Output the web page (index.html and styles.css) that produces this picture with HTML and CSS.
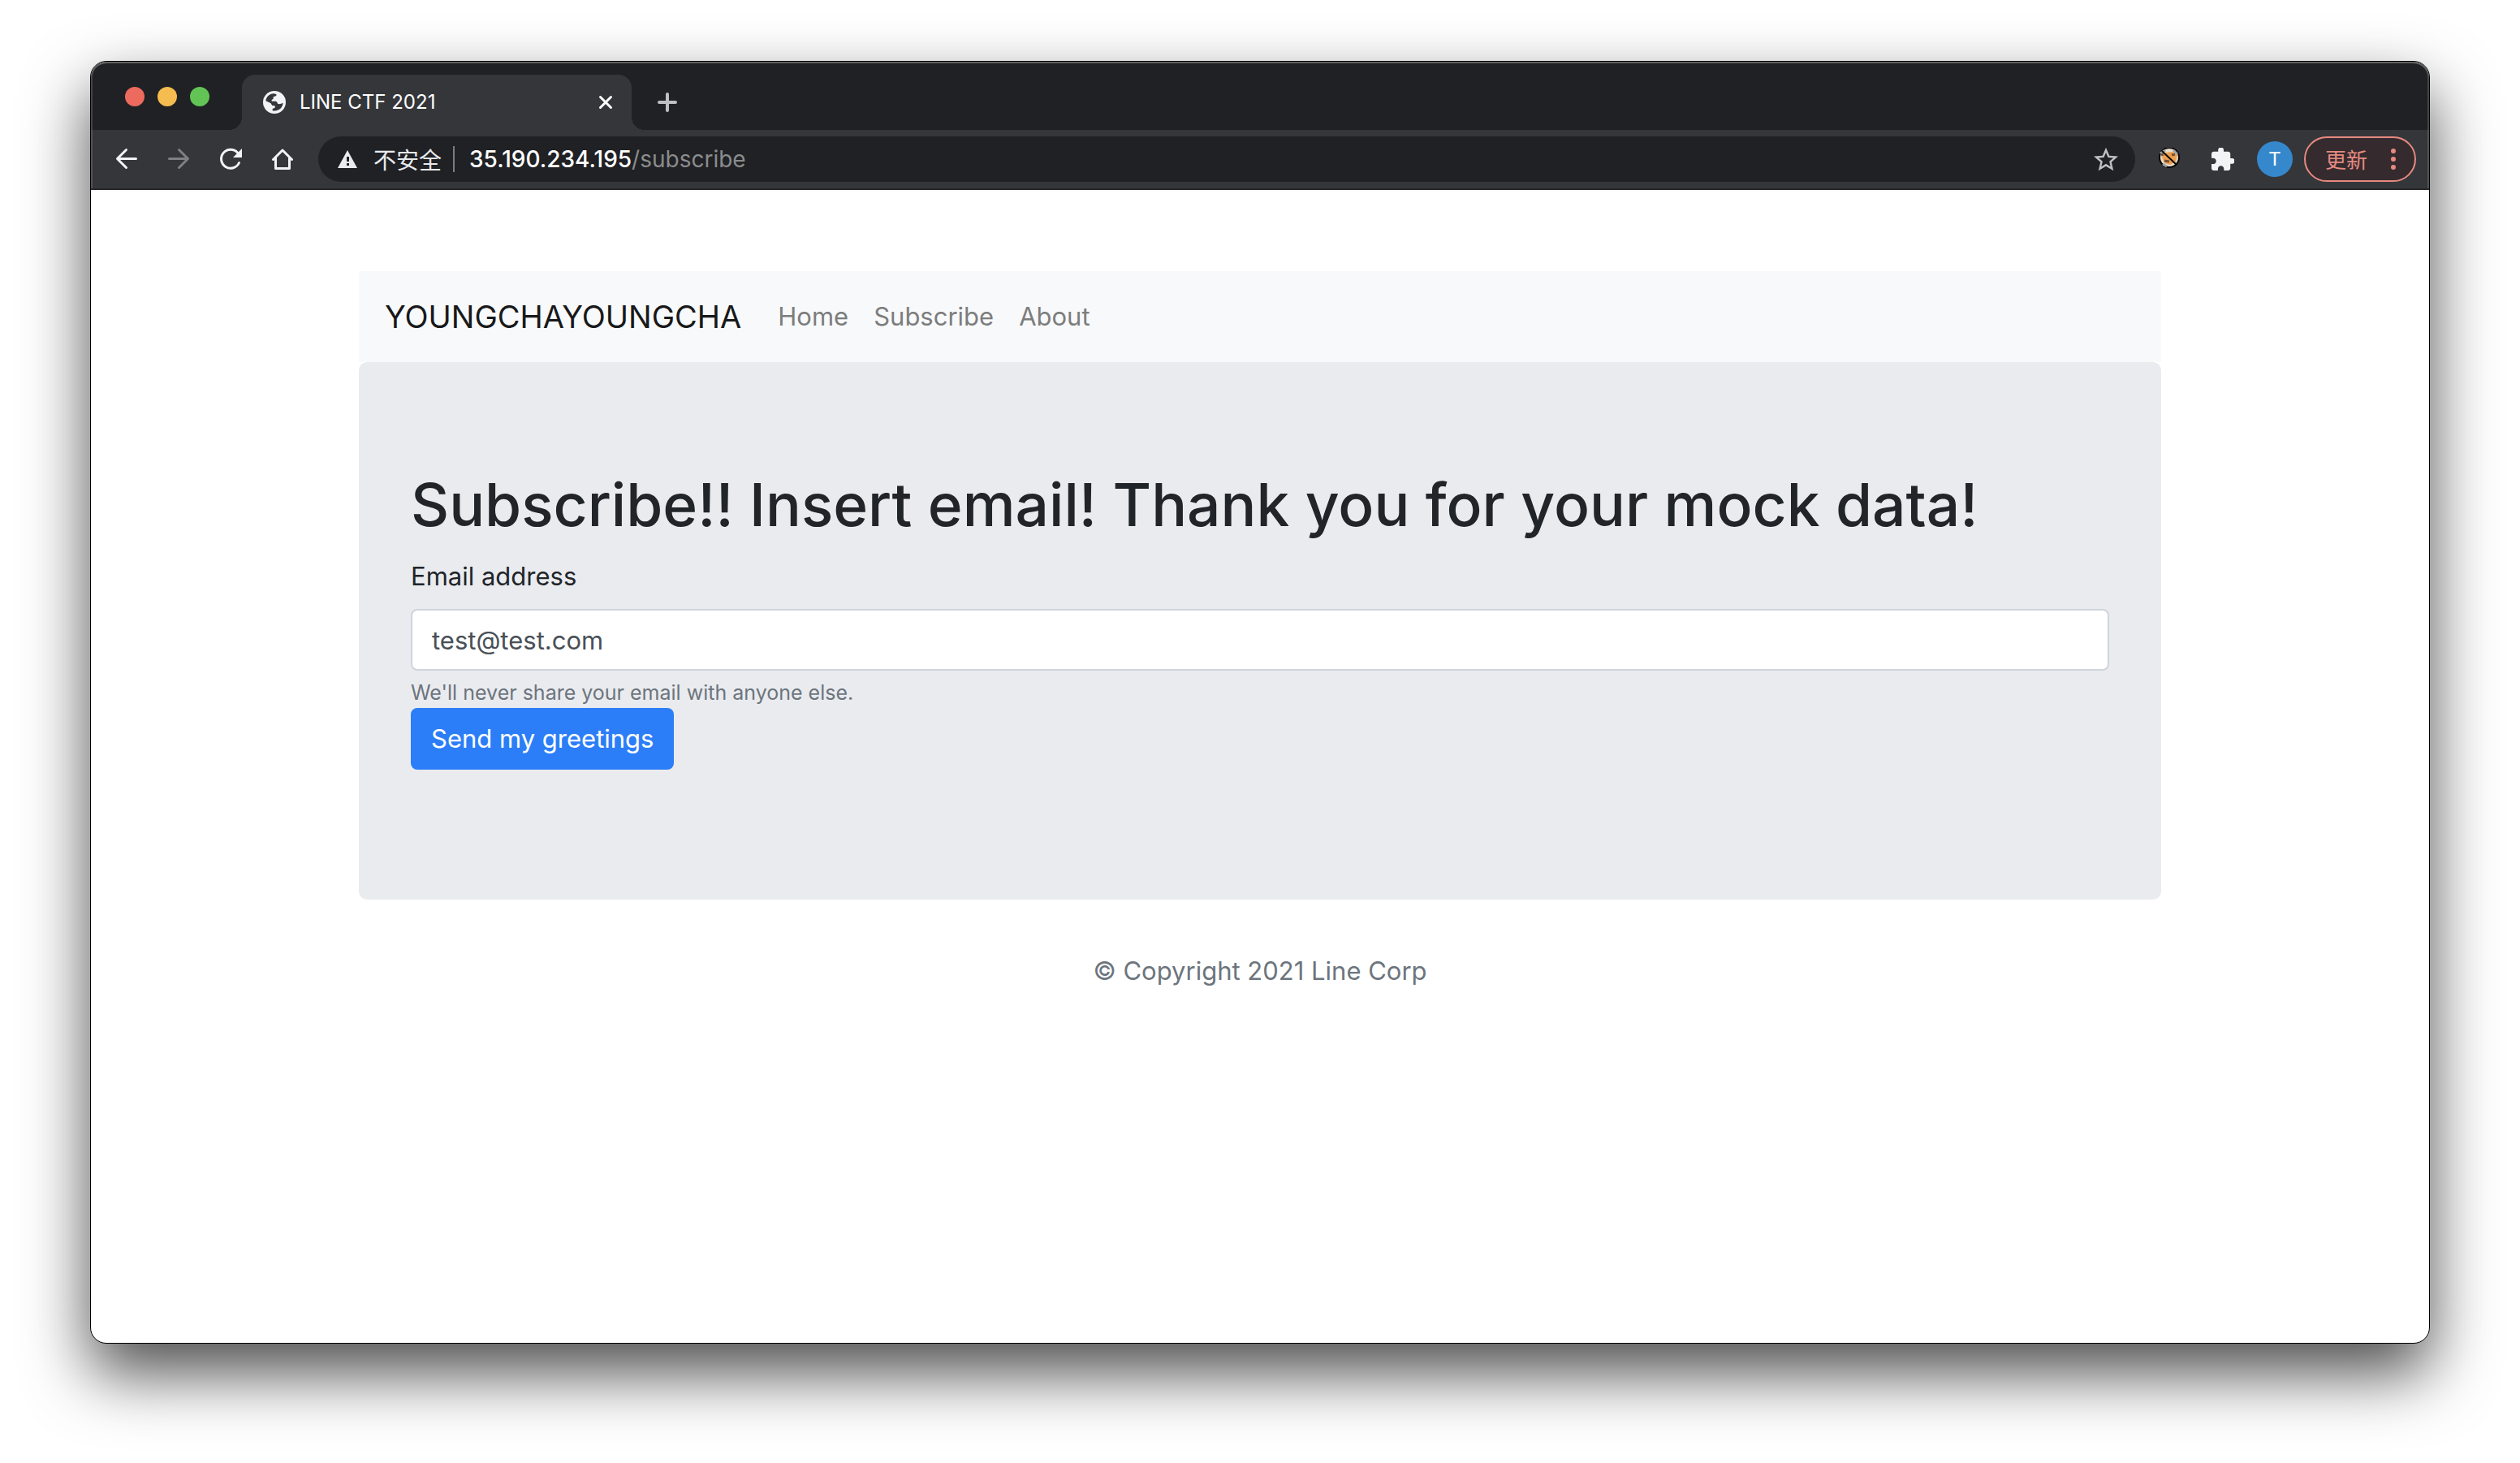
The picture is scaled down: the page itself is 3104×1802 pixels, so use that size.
FILE: index.html
```html
<!DOCTYPE html>
<html lang="en">
<head>
  <meta charset="utf-8">
  <meta name="viewport" content="width=device-width, initial-scale=1">
  <title>LINE CTF 2021</title>
  <link rel="stylesheet" href="styles.css">
</head>
<body>
  <div class="window">
    <header class="chrome">
      <div class="tabstrip">
        <div class="lights">
          <span class="light light-close"></span>
          <span class="light light-min"></span>
          <span class="light light-max"></span>
        </div>
        <div class="tab">
          <svg class="icon-28" viewBox="12 12 84 84" aria-hidden="true"><circle cx="54" cy="54" r="42" fill="#f1f3f4"/><path d="M22 49Q24 31 40 24Q50 20 61 24V30L50 34V41L44 45V50H59Q65 52 66 59Q73 63 86 56Q84 74 69 82Q58 87 47 85V78L56 74V67L46 66L40 57Z" fill="#35363a"/></svg>
          <span class="tab-title">LINE CTF 2021</span>
          <button class="plain" type="button" aria-label="Close tab"><svg class="icon-18" viewBox="0 0 18 18" fill="none" stroke="#fff" stroke-width="3" stroke-linecap="round"><path d="M2.500 2.500l13 13M15.500 2.500l-13 13"/></svg></button>
        </div>
        <button class="plain new-tab" type="button" aria-label="New tab"><svg class="icon-24" viewBox="0 0 24 24" fill="none" stroke="#bdc1c6" stroke-width="4" stroke-linecap="round"><path d="M12 2v20M2 12h20"/></svg></button>
      </div>
      <div class="toolbar">
        <div class="nav-buttons">
          <button class="plain" type="button" aria-label="Back"><svg class="icon-28" viewBox="0 0 28 28" fill="none" stroke="#f1f3f4" stroke-width="3" stroke-linecap="round" stroke-linejoin="round"><path d="M25.500 13.500H3M13.500 2.500l-11 11 11 11"/></svg></button>
          <button class="plain" type="button" aria-label="Forward"><svg class="icon-28" viewBox="0 0 28 28" fill="none" stroke="#7f8082" stroke-width="3" stroke-linecap="round" stroke-linejoin="round"><path d="M2.500 13.500H25M14.500 2.500l11 11-11 11"/></svg></button>
          <button class="plain" type="button" aria-label="Reload"><svg class="icon-28" viewBox="0 0 28 28"><path d="M24.500 18.500A11.500 11.500 0 1 1 22.500 6" fill="none" stroke="#f1f3f4" stroke-width="3" stroke-linecap="round"/><path d="M28 1v11H17z" fill="#f1f3f4"/></svg></button>
          <button class="plain" type="button" aria-label="Home"><svg class="icon-28" viewBox="0 0 28 28" fill="none" stroke="#f1f3f4" stroke-width="3" stroke-linecap="round" stroke-linejoin="round"><path d="M2.500 14.500L14 3l11.500 11.500M5.500 12.500v13h17v-13"/></svg></button>
        </div>
        <div class="omnibox">
          <svg class="icon-24" viewBox="0 0 24 24" aria-hidden="true"><path d="M12 1l12 22H0z" fill="#e8eaed"/><path d="M11 9h3v6h-3zM11 17h3v3h-3z" fill="#202124"/></svg>
          <span class="insecure" lang="zh">不安全</span>
          <span class="divider"></span>
          <span class="url"><span class="host">35.190.234.195</span>/subscribe</span>
          <button class="plain" type="button" aria-label="Bookmark"><svg class="icon-30" viewBox="2 1.500 20 20" fill="#bdc1c6"><path d="M22 9.240l-7.190-.62L12 2 9.190 8.630 2 9.240l5.460 4.730L5.820 21 12 17.270 18.180 21l-1.630-7.030L22 9.240zM12 15.400l-3.760 2.270 1-4.280-3.320-2.880 4.380-.38L12 6.100l1.710 4.040 4.380.38-3.320 2.880 1 4.280L12 15.400z"/></svg></button>
        </div>
        <button class="plain extension" type="button" aria-label="Extension"><svg class="icon-28" viewBox="0 0 28 28"><circle cx="14" cy="12" r="12" fill="#e9dccb" stroke="#090807" stroke-width="2"/><path d="M3 7l6-4M19 3l5 5M6 20l5 3" stroke="#9da3a8" stroke-width="3"/><path d="M5 12l4-6 9-1 6 4-2 8-7 4-7-2z" fill="#eda04e"/><path d="M4 9l3-1M17 9l4-1M8 16l6 1" stroke="#72533b" stroke-width="3"/><path d="M5 4l18 17" stroke="#090807" stroke-width="2"/></svg></button>
        <button class="plain" type="button" aria-label="Extensions"><svg class="icon-28" viewBox="2 1.500 20.500 20.500" fill="#f1f3f4"><path d="M20.500 11H19V7c0-1.100-.9-2-2-2h-4V3.500C13 2.120 11.880 1 10.500 1S8 2.120 8 3.500V5H4c-1.100 0-1.990.9-1.990 2v3.800H3.500c1.490 0 2.700 1.210 2.700 2.700s-1.210 2.700-2.700 2.700H2V20c0 1.100.9 2 2 2h3.800v-1.500c0-1.490 1.210-2.700 2.700-2.700 1.490 0 2.700 1.210 2.700 2.700V22H17c1.100 0 2-.9 2-2v-4h1.500c1.380 0 2.500-1.120 2.500-2.500S21.880 11 20.500 11z"/></svg></button>
        <button class="avatar" type="button">T</button>
        <button class="update" type="button" lang="zh">更新<svg class="dots" viewBox="0 0 6 28" fill="#e68a81" aria-hidden="true"><circle cx="3" cy="4" r="3"/><circle cx="3" cy="14" r="3"/><circle cx="3" cy="24" r="3"/></svg></button>
      </div>
    </header>
    <div class="page">
      <div class="container">
        <nav class="navbar">
          <a class="brand" href="#">YOUNGCHAYOUNGCHA</a>
          <a class="nav-link" href="#">Home</a>
          <a class="nav-link" href="#">Subscribe</a>
          <a class="nav-link" href="#">About</a>
        </nav>
        <main class="jumbotron">
          <h1 class="title">Subscribe!! Insert email! Thank you for your mock data!</h1>
          <form class="form">
            <label class="label" for="email">Email address</label>
            <input class="input" id="email" type="email" value="test@test.com" aria-describedby="email-help">
            <small class="help" id="email-help">We'll never share your email with anyone else.</small>
            <button class="submit" type="button">Send my greetings</button>
          </form>
        </main>
        <footer class="footer">© Copyright 2021 Line Corp</footer>
      </div>
    </div>
  </div>
</body>
</html>
```
FILE: styles.css
```css
* {
  box-sizing: border-box;
}

body {
  margin: 0;
  min-height: 100vh;
  padding: 75px 111px 147px;
  display: flex;
  background: #fff;
  color: #212529;
  font: 31px/48px Inter, "Noto Sans CJK TC", sans-serif;
}

button,
input {
  font: inherit;
}

.window {
  flex: 1;
  min-width: 0;
  display: flex;
  flex-direction: column;
  border: 1px solid #000;
  border-radius: 20px;
  background: #fff;
  box-shadow: 0 36px 80px rgba(0, 0, 0, 0.7);
}

.plain {
  display: flex;
  padding: 0;
  border: 0;
  background: none;
}

.icon-18 { width: 18px; height: 18px; }
.icon-24 { width: 24px; height: 24px; }
.icon-28 { width: 28px; height: 28px; }
.icon-30 { width: 30px; height: 30px; }

/* Browser chrome */
.tabstrip {
  display: flex;
  align-items: flex-end;
  height: 84px;
  padding-left: 42px;
  border-radius: 20px 20px 0 0;
  background: #202124;
  box-shadow: inset 0 2px #606360, inset 2px 0 #434447, inset -2px 0 #434447;
}

.lights {
  display: flex;
  gap: 16px;
  margin-right: 40px;
  padding-bottom: 29px;
}

.light {
  width: 24px;
  height: 24px;
  border-radius: 50%;
}

.light-close { background: #ed6a5e; }
.light-min { background: #f5bd4f; }
.light-max { background: #61c454; }

.tab {
  position: relative;
  display: flex;
  align-items: center;
  gap: 17px;
  width: 480px;
  height: 68px;
  padding: 0 23px 0 26px;
  border-radius: 16px 16px 0 0;
  background: #35363a;
}

.tab::before,
.tab::after {
  content: "";
  position: absolute;
  bottom: 0;
  width: 16px;
  height: 16px;
}

.tab::before {
  right: 100%;
  background: radial-gradient(circle at 0 0, transparent 16px, #35363a 16px);
}

.tab::after {
  left: 100%;
  background: radial-gradient(circle at 100% 0, transparent 16px, #35363a 16px);
}

.tab-title {
  flex: 1;
  color: #fff;
  font-size: 24px;
}

.new-tab {
  margin-left: 32px;
  padding-bottom: 22px;
}

.toolbar {
  display: flex;
  align-items: center;
  gap: 28px;
  padding: 8px 16px 10px 30px;
  background: #35363a;
  box-shadow: inset 0 -2px #262629, inset 2px 0 #505154, inset -2px 0 #505154;
}

.nav-buttons {
  display: flex;
  gap: 36px;
  margin-right: 2px;
}

.omnibox {
  flex: 1;
  min-width: 0;
  display: flex;
  align-items: center;
  height: 56px;
  padding: 0 21px 0 24px;
  border-radius: 28px;
  background: #202124;
  color: #e8eaed;
  font-size: 28px;
}

.insecure {
  margin-left: 20px;
  font-family: "Noto Sans CJK TC", sans-serif;
}

.divider {
  width: 2px;
  height: 32px;
  margin: 0 18px 0 14px;
  background: #7c7d80;
}

.url {
  flex: 1;
  color: #8b8c8e;
}

.host {
  color: #fff;
  font-weight: 500;
}

.extension {
  margin-right: 10px;
}

.avatar {
  width: 44px;
  height: 44px;
  padding: 0;
  border: 0;
  border-radius: 50%;
  background: #3688cc;
  color: #fff;
  font: 24px/44px Roboto, sans-serif;
}

.update {
  display: flex;
  align-items: center;
  justify-content: space-between;
  width: 138px;
  height: 56px;
  margin-left: -14px;
  padding: 0 23px 0 24px;
  border: 2px solid #e68a81;
  border-radius: 28px;
  background: #352b2e;
  color: #e68a81;
  font: 26px/48px "Noto Sans CJK TC", sans-serif;
}

.dots {
  width: 6px;
  height: 28px;
}

/* Page */
.page {
  flex: 1;
  padding: 100px 30px 0;
}

.container {
  max-width: 2220px;
  margin: 0 auto;
}

.navbar {
  display: flex;
  align-items: center;
  gap: 31px;
  min-height: 112px;
  padding: 0 32px;
  background: #f8f9fa;
}

.brand {
  margin-right: 14px;
  color: #18191a;
  font-size: 38px;
  text-decoration: none;
}

.nav-link {
  color: #7c7d7d;
  text-decoration: none;
}

.jumbotron {
  padding: 128px 64px 160px;
  border-radius: 10px;
  background: #eaebef;
}

.title {
  margin: 0 0 16px;
  font-size: 73px;
  font-weight: 500;
  line-height: 96px;
}

.form {
  display: flex;
  flex-direction: column;
  align-items: flex-start;
}

.label {
  margin-bottom: 16px;
}

.input {
  width: 100%;
  height: 76px;
  padding: 0 24px;
  border: 2px solid #ced4da;
  border-radius: 8px;
  background: #fff;
  color: #495057;
}

.help {
  margin-top: 8px;
  color: #6c757d;
  font-size: 25px;
  line-height: 38px;
}

.submit {
  height: 76px;
  padding: 0 25px;
  border: 0;
  border-radius: 8px;
  background: #2b7ef7;
  color: #fff;
}

.footer {
  padding: 64px 0;
  color: #6c757d;
  text-align: center;
}
```
